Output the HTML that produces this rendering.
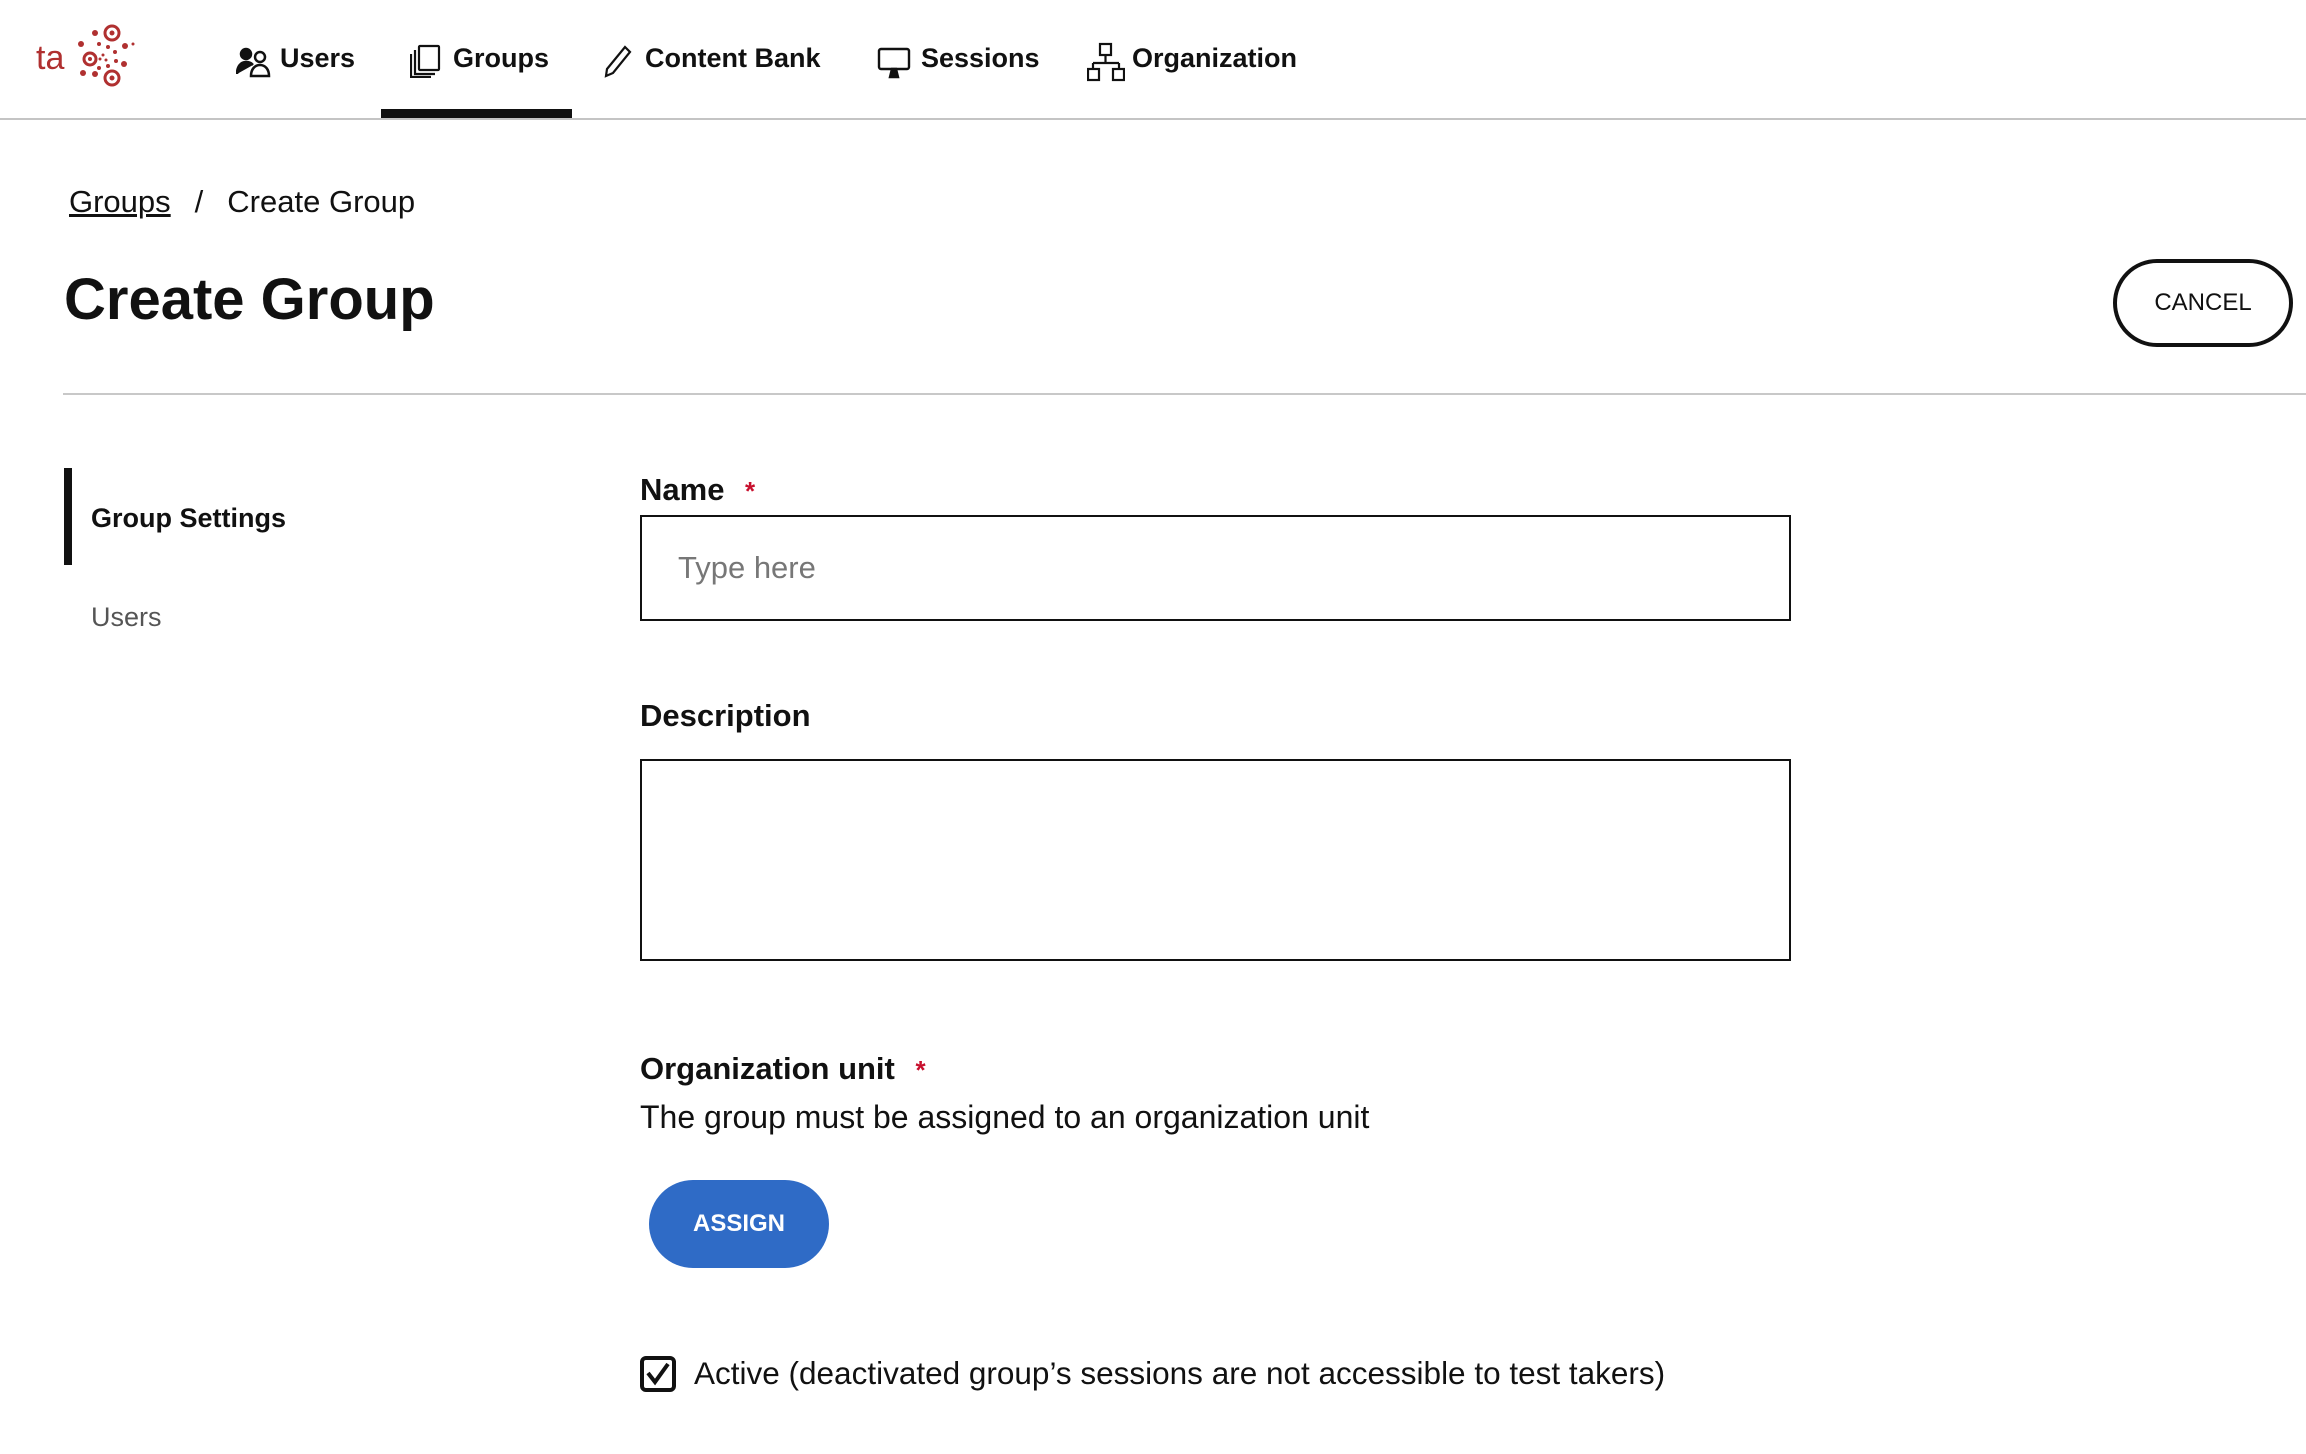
<!DOCTYPE html>
<html><head><meta charset="utf-8"><style>
*{box-sizing:border-box;margin:0;padding:0}
body{width:2306px;height:1454px;background:#fff;font-family:"Liberation Sans",sans-serif;color:#111;position:relative;overflow:hidden}
.a{position:absolute;white-space:nowrap}
.nav{font-size:27px;font-weight:bold;top:43px}
.lbl{font-size:31px;font-weight:bold}
.req{color:#c8102e;font-size:26px}
</style></head><body>
<svg class="a" style="left:30px;top:20px" width="120" height="70" viewBox="30 20 120 70">
<text x="36" y="69" font-family="Liberation Sans" font-size="34" fill="#b03030">ta</text>
<circle cx="90" cy="59" r="6" fill="none" stroke="#b03030" stroke-width="3"/><circle cx="90" cy="59" r="2" fill="#b03030"/>
<circle cx="112" cy="33" r="7" fill="none" stroke="#b03030" stroke-width="3"/><circle cx="112" cy="33" r="2.5" fill="#b03030"/>
<circle cx="112" cy="78" r="7" fill="none" stroke="#b03030" stroke-width="3"/><circle cx="112" cy="78" r="2.5" fill="#b03030"/>
<g fill="#b03030"><circle cx="95" cy="33" r="3"/><circle cx="81" cy="44" r="3"/><circle cx="125" cy="46" r="3"/><circle cx="124" cy="64" r="3"/><circle cx="83" cy="73" r="3"/><circle cx="95" cy="74" r="3"/>
<circle cx="99" cy="44" r="2"/><circle cx="108" cy="47" r="2"/><circle cx="115" cy="52" r="2"/><circle cx="116" cy="61" r="2"/><circle cx="108" cy="66" r="2"/><circle cx="99" cy="68" r="2"/><circle cx="103" cy="55" r="1.5"/><circle cx="106" cy="60" r="1.5"/><circle cx="100" cy="59" r="1.5"/>
<circle cx="133" cy="44" r="1.5"/></g></svg>

<svg class="a" style="left:236px;top:46px" width="36" height="32" viewBox="0 0 36 32" fill="none" stroke="#111" stroke-width="2.5"><circle cx="10" cy="8" r="5" fill="#111"/><path d="M1 28c0-8 4-12 9-12s6 2 7 3" fill="#111"/><circle cx="24" cy="11" r="5"/><path d="M15 30c0-7 4-11 9-11s9 4 9 11z"/></svg>
<div class="a nav" style="left:280px">Users</div>
<svg class="a" style="left:410px;top:44px" width="32" height="34" viewBox="0 0 32 34" fill="none" stroke="#111" stroke-width="2.2"><rect x="9" y="2" width="20" height="24" rx="1"/><path d="M5 6v24h20"/><path d="M1 10v23h20"/></svg>
<div class="a nav" style="left:453px">Groups</div>
<svg class="a" style="left:603px;top:44px" width="30" height="34" viewBox="0 0 30 34" fill="none" stroke="#111" stroke-width="2.2"><path d="M22 3l5 5-17 21-7 3 1-7z"/></svg>
<div class="a nav" style="left:645px">Content Bank</div>
<svg class="a" style="left:877px;top:47px" width="34" height="32" viewBox="0 0 34 32" fill="none" stroke="#111" stroke-width="2.4"><rect x="2" y="2" width="30" height="20" rx="2"/><path d="M13 30l2-8h4l2 8z" fill="#111"/></svg>
<div class="a nav" style="left:921px">Sessions</div>
<svg class="a" style="left:1087px;top:42px" width="38" height="40" viewBox="0 0 38 40" fill="none" stroke="#111" stroke-width="2.2"><rect x="13" y="2" width="11" height="11"/><path d="M18.5 13v8M6 21h26M6 21v6M32 21v6"/><rect x="1" y="27" width="11" height="11"/><rect x="26" y="27" width="11" height="11"/></svg>
<div class="a nav" style="left:1132px">Organization</div>
<div class="a" style="left:381px;top:109px;width:191px;height:9px;background:#111"></div>
<div class="a" style="left:0;top:118px;width:2306px;height:2px;background:#c4c4c4"></div>

<div class="a" style="left:69px;top:184px;font-size:31px"><span style="text-decoration:underline">Groups</span><span style="margin-left:24px">/</span><span style="margin-left:24px">Create Group</span></div>
<div class="a" style="left:64px;top:266px;font-size:58px;font-weight:bold">Create Group</div>
<div class="a" style="left:2113px;top:259px;width:180px;height:88px;border:4px solid #111;border-radius:44px;font-size:24px;text-align:center;line-height:80px">CANCEL</div>
<div class="a" style="left:63px;top:393px;width:2243px;height:2px;background:#c8c8c8"></div>

<div class="a" style="left:64px;top:468px;width:8px;height:97px;background:#111"></div>
<div class="a" style="left:91px;top:503px;font-size:27px;font-weight:bold">Group Settings</div>
<div class="a" style="left:91px;top:602px;font-size:27px;color:#555">Users</div>

<div class="a lbl" style="left:640px;top:472px">Name <span class="req" style="margin-left:12px">*</span></div>
<div class="a" style="left:640px;top:515px;width:1151px;height:106px;border:2px solid #111"></div>
<div class="a" style="left:678px;top:550px;font-size:31px;color:#777">Type here</div>
<div class="a lbl" style="left:640px;top:698px">Description</div>
<div class="a" style="left:640px;top:759px;width:1151px;height:202px;border:2px solid #111"></div>
<div class="a lbl" style="left:640px;top:1051px">Organization unit <span class="req" style="margin-left:12px">*</span></div>
<div class="a" style="left:640px;top:1099px;font-size:32px">The group must be assigned to an organization unit</div>
<div class="a" style="left:649px;top:1180px;width:180px;height:88px;border-radius:44px;background:#2f6bc6;color:#fff;font-size:24px;font-weight:bold;text-align:center;line-height:88px">ASSIGN</div>
<svg class="a" style="left:640px;top:1356px" width="36" height="36" viewBox="0 0 36 36"><rect x="2" y="2" width="32" height="32" rx="4" fill="none" stroke="#111" stroke-width="4"/><path d="M8 17l7 9 13-18" fill="none" stroke="#111" stroke-width="4"/></svg>
<div class="a" style="left:694px;top:1355px;font-size:31.5px">Active (deactivated group’s sessions are not accessible to test takers)</div>
</body></html>
